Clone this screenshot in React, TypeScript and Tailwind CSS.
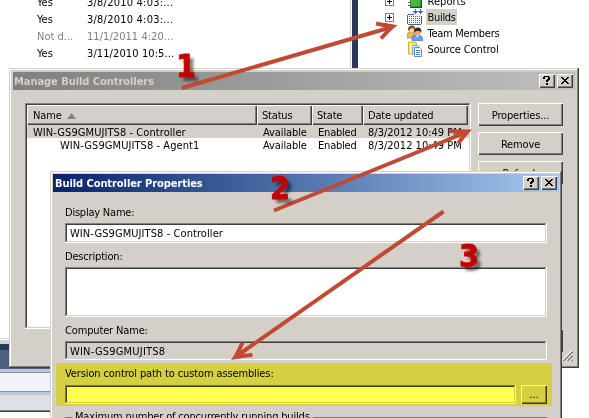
import type { ReactNode } from 'react';
import clsx from 'clsx';

const RAISED =
  'bg-[#d4d0c8] shadow-[inset_1px_1px_#fff,inset_-1px_-1px_#404040,inset_-2px_-2px_#808080]';
const SUNKEN =
  'shadow-[inset_-1px_-1px_#fff,inset_1px_1px_#808080,inset_-2px_-2px_#d4d0c8,inset_2px_2px_#404040]';
const FRAME =
  'bg-[#d4d0c8] shadow-[inset_-1px_-1px_#404040,inset_1px_1px_#d4d0c8,inset_-2px_-2px_#808080,inset_2px_2px_#fff]';

function CaptionButtons() {
  return (
    <div className="flex gap-[2px]">
      <div className={clsx(RAISED, 'flex h-[14px] w-4 justify-center pt-[2px] pr-px')}>
        <svg width="7" height="9" viewBox="0 0 7 9" shapeRendering="crispEdges">
          <path d="M1 0h5v1h1v3h-1v1h-1v1h-2v-2h1v-1h1v-2h-3v2h-2v-2h1zM3 7h2v2h-2z" fill="#000" />
        </svg>
      </div>
      <div className={clsx(RAISED, 'flex h-[14px] w-4 justify-center pt-[3px]')}>
        <svg width="8" height="7" viewBox="0 0 8 7" shapeRendering="crispEdges">
          <path
            d="M0 0h2v1h1v1h2v-1h1v-1h2v1h-1v1h-1v1h-1v1h1v1h1v1h1v1h-2v-1h-1v-1h-2v1h-1v1h-2v-1h1v-1h1v-1h1v-1h-1v-1h-1v-1h-1z"
            fill="#000"
          />
        </svg>
      </div>
    </div>
  );
}

function PushButton({ children, className }: { children?: ReactNode; className?: string }) {
  return (
    <div
      className={clsx(
        RAISED,
        'flex h-[23px] w-[85px] shrink-0 items-center justify-center pt-[2px] tracking-[-0.15px]',
        className,
      )}
    >
      {children}
    </div>
  );
}

function HeaderCell({ children, className }: { children: ReactNode; className: string }) {
  return <div className={clsx(RAISED, 'flex items-center gap-[5px] pt-px', className)}>{children}</div>;
}

function Expander() {
  return (
    <svg width="9" height="9" viewBox="0 0 9 9" shapeRendering="crispEdges" className="shrink-0">
      <rect x=".5" y=".5" width="8" height="8" fill="#fff" stroke="#808080" />
      <path d="M2 4h5v1h-5zM4 2h1v5h-1z" fill="#000" />
    </svg>
  );
}

function ReportsIcon() {
  return (
    <svg width="16" height="16" viewBox="0 0 16 16">
      <path d="M3 1h12v14H3z" fill="#2f9a2c" />
      <path d="M4 2h9v11H4z" fill="#48b53c" />
      <path d="M14 1h1v14H3v-1h11z" fill="#0c5c10" />
      <path d="M1 3h3v1H1zM1 6h3v1H1zM1 9h3v1H1zM1 12h3v1H1z" fill="#555" />
    </svg>
  );
}

function BuildsIcon() {
  return (
    <svg width="16" height="16" viewBox="0 0 16 16" shapeRendering="crispEdges">
      <path d="M1 6h14v9H1z" fill="#f5f8fd" />
      <path d="M1 5h6v1H1zM0 6h1v9H0zM1 15h13v1H1zM14 7h1v8h-1z" fill="#47628f" />
      <path
        d="M2 7h1v1H2zM4 7h1v1H4zM6 7h1v1H6zM8 7h1v1H8zM10 7h1v1h-1zM12 7h1v1h-1zM2 9h1v1H2zM4 9h1v1H4zM6 9h1v1H6zM8 9h1v1H8zM10 9h1v1h-1zM12 9h1v1h-1zM2 11h1v1H2zM4 11h1v1H4zM6 11h1v1H6zM8 11h1v1H8zM10 11h1v1h-1zM12 11h1v1h-1zM2 13h1v1H2zM4 13h1v1H4zM6 13h1v1H6zM8 13h1v1H8zM10 13h1v1h-1zM12 13h1v1h-1z"
        fill="#4c6697"
      />
      <path
        d="M8 0h1v2h2v1h-1v1h-1v1h-1v-1h-1v-1h-1v-1h2zM13 0h1v2h2v1h-1v1h-1v1h-1v-1h-1v-1h-1v-1h2z"
        fill="#2f6ff0"
      />
    </svg>
  );
}

function TeamIcon() {
  return (
    <svg width="16" height="16" viewBox="0 0 16 16">
      <path d="M0 13V10q0-3 4-3t4 3v3z" fill="#f3b64a" stroke="#b87716" strokeWidth=".6" />
      <circle cx="4.5" cy="4.5" r="3" fill="#f7cfa2" />
      <path d="M1 5q-.5-4 3.500-4.500t3.500 3.500l-3-1-2 1-1 2z" fill="#8a4d16" />
      <path d="M5 15.500V13q0-3 5-3t5.500 3v2.500z" fill="#5fa2f4" stroke="#2a63c0" strokeWidth=".6" />
      <circle cx="10.500" cy="7.500" r="3.100" fill="#e9a873" />
      <path d="M7 8q-1-5 3.500-5.500t3.800 5.500l-1.500-2h-4z" fill="#33251f" />
      <path d="M9 10.500l1.500 2 1.500-2z" fill="#fff" />
    </svg>
  );
}

function SourceIcon() {
  return (
    <svg width="16" height="16" viewBox="0 0 16 16">
      <path d="M1.500 1h7l1 1v11h-8z" fill="#f8dc7c" stroke="#cf9f30" strokeWidth=".8" />
      <path d="M3 2.500h2v10H3z" fill="#fff1ba" />
      <path d="M5.500 4.500h5l2 2v7h-7z" fill="#dbe8fb" stroke="#6e94cc" strokeWidth=".8" />
      <path d="M7.500 6.500h5l2 2v7h-7z" fill="#fff" stroke="#4c7bc6" strokeWidth=".9" />
      <path d="M9 9.500h4M9 11.500h4M9 13.500h4" stroke="#4c7bc6" />
    </svg>
  );
}

function HistoryPane() {
  const rows = [
    { state: 'Yes', date: '3/8/2010 4:03:...', cls: 'tracking-[0.22px]' },
    { state: 'Yes', date: '3/8/2010 4:03:...', cls: 'tracking-[0.22px]' },
    { state: 'Not d...', date: '11/1/2011 4:20...', cls: 'tracking-[0.05px]', dim: true },
    { state: 'Yes', date: '3/11/2010 10:5...', cls: 'tracking-[0.1px]' },
  ];
  return (
    <div className="flex w-[352px] shrink-0 flex-col">
      <div className="mr-px h-[339px] border-r border-b border-[#d4d0c8] bg-white">
        <div className="-mt-[6px] pl-[37px]">
          {rows.map((r, i) => (
            <div key={i} className={clsx('flex h-[17px] items-center', r.dim && 'text-[#808080]')}>
              <span className="w-[50px]">{r.state}</span>
              <span className={r.cls}>{r.date}</span>
            </div>
          ))}
        </div>
      </div>
      <div className="mt-px h-1 bg-[#ced4df]" />
      <div className="h-[6px] bg-[#293955]" />
      <div className="h-[19px] bg-[#4d6082]" />
      <div className="h-[4px] border-b border-[#8591ab] bg-[#bcc7d8]" />
      <div className="h-[18px] bg-[#f0f2f8]" />
      <div className="h-[4px] border-t border-[#7f93a8] bg-[#b9c8d6]" />
      <div className="h-[15px] bg-[#dde0e8]" />
      <div className="h-[2px] border-t border-[#808080] bg-[#404040]" />
    </div>
  );
}

function ProjectTree() {
  const items = [
    { label: 'Reports', icon: <ReportsIcon />, expand: true, cls: 'tracking-[0.05px]' },
    { label: 'Builds', icon: <BuildsIcon />, expand: true, cls: 'bg-[#d4d0c8] tracking-[-0.3px]' },
    { label: 'Team Members', icon: <TeamIcon />, cls: 'tracking-[-0.26px]' },
    { label: 'Source Control', icon: <SourceIcon />, cls: 'tracking-[-0.12px]' },
  ];
  return (
    <div className="-mt-[7px] flex flex-col pl-[27px]">
      {items.map((it) => (
        <div key={it.label} className="flex h-4 items-center">
          <div className="w-[22px]">{it.expand && <Expander />}</div>
          {it.icon}
          <span className={clsx('ml-[3px] h-4 px-[1.5px] leading-[18px]', it.cls)}>{it.label}</span>
        </div>
      ))}
    </div>
  );
}

function ControllersWindow() {
  return (
    <div className={clsx(FRAME, 'absolute top-[68px] left-[9px] h-[300px] w-[570px] p-1')}>
      <div className="flex h-[18px] items-center justify-between bg-linear-to-r from-[#808080] to-[#c0c0c0] pr-[2px] pl-[1px]">
        <span className="pt-px font-bold tracking-[-0.05px] text-[#d4d0c8]">Manage Build Controllers</span>
        <CaptionButtons />
      </div>
      <div className="mt-[13px] ml-3 flex gap-[7px]">
        <div className={clsx(SUNKEN, 'h-[226px] w-[446px] bg-white p-[2px]')}>
          <div className="flex h-5 bg-[#d4d0c8]">
            <HeaderCell className="w-[230px] pl-[6px]">
              <span className="tracking-[-0.1px]">Name</span>
              <svg width="9" height="6" viewBox="0 0 9 6">
                <path d="M4.500 0L9 6H0z" fill="#808080" />
              </svg>
            </HeaderCell>
            <HeaderCell className="w-[55px] pl-[5px] tracking-[-0.2px]">Status</HeaderCell>
            <HeaderCell className="w-[51px] pl-[5px] tracking-[-0.2px]">State</HeaderCell>
            <HeaderCell className="w-[105px] pl-[5px] tracking-[-0.22px]">Date updated</HeaderCell>
          </div>
          <Row name="WIN-GS9GMUJITS8 - Controller" className="bg-[#d4d0c8]" nameClass="pl-[6px]" />
          <Row name="WIN-GS9GMUJITS8 - Agent1" nameClass="pl-[33px]" />
        </div>
        <div className="flex flex-col gap-[6px]">
          <PushButton>Properties...</PushButton>
          <PushButton>Remove</PushButton>
          <PushButton>Refresh</PushButton>
          <PushButton className="mt-[139px]">Close</PushButton>
        </div>
      </div>
      <svg width="11" height="11" viewBox="0 0 11 11" className="absolute right-[6px] bottom-[7px]">
        <path d="M0 10.500L10.500 0M4 10.500L10.500 4M8 10.500L10.500 8" stroke="#fff" strokeWidth="1.200" />
        <path d="M1.500 11L11 1.500M5.500 11L11 5.500M9.500 11L11 9.500" stroke="#808080" strokeWidth="1.700" />
      </svg>
    </div>
  );
}

function Row({ name, className, nameClass }: { name: string; className?: string; nameClass: string }) {
  return (
    <div className={clsx('flex h-[13px] leading-[15px] whitespace-nowrap', className)}>
      <span className={clsx('w-[236px] tracking-[0.07px]', nameClass)}>{name}</span>
      <span className="w-[55px] tracking-[-0.1px]">Available</span>
      <span className="w-[50px] tracking-[-0.2px]">Enabled</span>
      <span>8/3/2012 10:49 PM</span>
    </div>
  );
}

function PropertiesWindow() {
  return (
    <div className={clsx(FRAME, 'absolute top-[171px] left-[50px] h-[300px] w-[512px] p-[3px]')}>
      <div className="flex h-[18px] items-center justify-between bg-linear-to-r from-[#0a246a] to-[#a6caf0] pr-[2px] pl-[2px]">
        <span className="pt-px font-bold tracking-[-0.07px] text-white">Build Controller Properties</span>
        <CaptionButtons />
      </div>
      <div className="flex flex-col px-3">
        <label className="mt-[14px] h-[14px] leading-[14px] tracking-[-0.22px]">Display Name:</label>
        <div className={clsx(SUNKEN, 'mt-[3px] flex h-5 items-center bg-white pt-[2px] pl-[5px] tracking-[0.08px]')}>
          WIN-GS9GMUJITS8 - Controller
        </div>
        <label className="mt-[7px] h-[14px] leading-[14px] tracking-[-0.18px]">Description:</label>
        <div className={clsx(SUNKEN, 'mt-[3px] h-[50px] bg-white')} />
        <label className="mt-[7px] h-[14px] leading-[14px] tracking-[-0.15px]">Computer Name:</label>
        <div className={clsx(SUNKEN, 'mt-[3px] flex h-[19px] items-center bg-[#d4d0c8] pt-[2px] pl-[5px] tracking-[0.2px]')}>
          WIN-GS9GMUJITS8
        </div>
      </div>
      <div className="relative mt-[3px] mr-[7px] ml-[3px] h-[43px] pr-[5px] pl-[9px]">
        <label className="block pt-1 leading-[14px] tracking-[-0.12px]">
          Version control path to custom assemblies:
        </label>
        <div className="mt-1 flex gap-[5px]">
          <div className={clsx(SUNKEN, 'h-[19px] w-[451px] bg-white')} />
          <div className={clsx(RAISED, 'flex h-[19px] w-[26px] items-center justify-center pt-px')}>...</div>
        </div>
        <div className="absolute inset-0 bg-[#ffff52] mix-blend-multiply" />
      </div>
      <div className="mx-3 flex h-[22px] items-center gap-[3px]">
        <div className="mt-[2px] h-[2px] w-[7px] border-t border-[#808080] bg-white" />
        <span className="tracking-[-0.17px]">Maximum number of concurrently running builds</span>
        <div className="mt-[2px] h-[2px] flex-1 border-t border-[#808080] bg-white" />
      </div>
    </div>
  );
}

function Annotations() {
  const digit =
    'absolute text-[32px] leading-[32px] font-bold text-[#c40000] [-webkit-text-stroke:0.8px_#c40000] [text-shadow:4px_4px_3px_rgba(0,0,0,0.5)]';
  return (
    <div className="absolute inset-0">
      <svg width="589" height="418" viewBox="0 0 589 418" className="absolute inset-0">
        <g fill="none" stroke="#c14a32" strokeWidth="4">
          <path d="M182 88L392 27M376 23.500L392 26.700L381 38.500" />
          <path d="M274 210.500L467 132M449 131L467 132L458 143.500" />
          <path d="M443.500 211.500L236 356.500M242.500 342.500L236 356.500L252.500 355" />
        </g>
        <g fill="#c14a32">
          <path d="M397.500 25.300L384 22.800L388 33z" />
          <path d="M472 129.500L458 129.500L463 139z" />
          <path d="M231 360L238 349L245 357.500z" />
        </g>
      </svg>
      <span className={clsx(digit, 'top-[50px] left-[176px]')}>1</span>
      <span className={clsx(digit, 'top-[172px] left-[270px]')}>2</span>
      <span className={clsx(digit, 'top-[240px] left-[459px]')}>3</span>
    </div>
  );
}

export default function App() {
  return (
    <div className="relative h-[418px] w-[589px] overflow-hidden bg-white font-['DejaVu_Sans_Condensed','DejaVu_Sans',sans-serif] text-[11px] leading-[14px] text-black">
      <div className="flex h-full">
        <HistoryPane />
        <div className="h-[350px] w-[6px] shrink-0 bg-[#293955]" />
        <ProjectTree />
      </div>
      <ControllersWindow />
      <PropertiesWindow />
      <Annotations />
    </div>
  );
}
